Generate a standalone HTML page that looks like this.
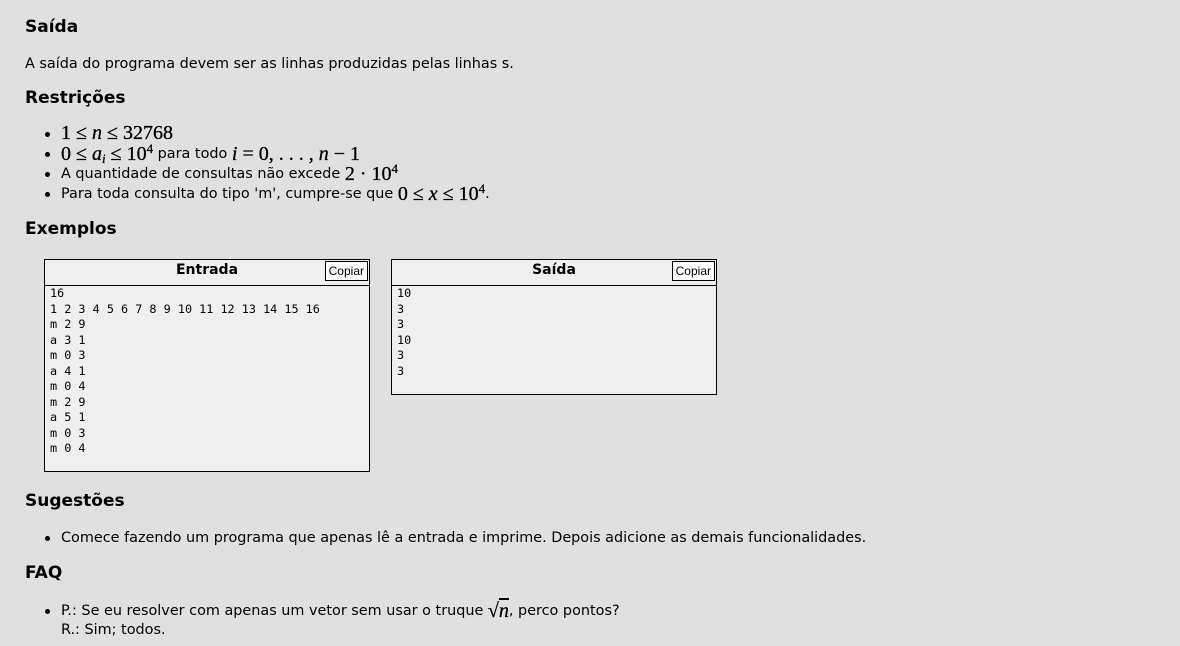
<!DOCTYPE html>
<html><head><meta charset="utf-8"><style>
body{margin:0;width:1180px;height:646px;background:#e0e0e0;font-family:"DejaVu Sans","Liberation Sans",sans-serif;font-size:14.4px;color:#000;position:relative;overflow:hidden}
.a{position:absolute;line-height:20px;white-space:nowrap}
h3{position:absolute;margin:0;font-size:17px;line-height:20px;font-weight:bold;left:25px}
.m{font-family:"Liberation Serif",serif;font-size:20px;line-height:0;position:relative;top:2px;-webkit-text-stroke:0.3px #000}
.m i{font-style:italic}
sup,sub{font-size:13px;line-height:0}
sup{vertical-align:7px}
sub{vertical-align:-3px}
.b{position:absolute;left:45px}
.b::before{content:"";position:absolute;left:0;top:9px;width:5px;height:5px;border-radius:50%;background:#000}
.t{left:61px}
.box{position:absolute;border:1px solid #000;background:#efefef}
.hd{height:25px;border-bottom:1px solid #000;text-align:center;font-weight:bold;font-size:14px;line-height:20px;position:relative}
.cp{position:absolute;right:1px;top:1px;border:1px solid #000;font-family:"Liberation Sans",sans-serif;font-weight:normal;font-size:12px;padding:0 3px;line-height:18px;background:#fff}
pre{margin:0;padding:0 5px;font-family:"DejaVu Sans Mono",monospace;font-size:11.8px;line-height:15.5px}
</style></head><body>
<h3 style="top:17px">Saída</h3>
<div class="a" style="left:25px;top:54px">A saída do programa devem ser as linhas produzidas pelas linhas s.</div>
<h3 style="top:88px">Restrições</h3>
<div class="b" style="top:123px"></div><div class="a t" style="top:123px"><span class="m">1 ≤ <i>n</i> ≤ 32768</span></div>
<div class="b" style="top:143px"></div><div class="a t" style="top:144px"><span class="m">0 ≤ <i>a<sub>i</sub></i> ≤ 10<sup>4</sup></span> para todo <span class="m"><i>i</i> = 0, . . . , <i>n</i> − 1</span></div>
<div class="b" style="top:163px"></div><div class="a t" style="top:164px">A quantidade de consultas não excede <span class="m">2 · 10<sup>4</sup></span></div>
<div class="b" style="top:183px"></div><div class="a t" style="top:184px">Para toda consulta do tipo 'm', cumpre-se que <span class="m">0 ≤ <i>x</i> ≤ 10<sup>4</sup></span>.</div>
<h3 style="top:219px">Exemplos</h3>
<div class="box" style="left:44px;top:259px;width:324px;height:211px"><div class="hd">Entrada<span class="cp">Copiar</span></div>
<pre>16
1 2 3 4 5 6 7 8 9 10 11 12 13 14 15 16
m 2 9
a 3 1
m 0 3
a 4 1
m 0 4
m 2 9
a 5 1
m 0 3
m 0 4</pre></div>
<div class="box" style="left:391px;top:259px;width:324px;height:134px"><div class="hd">Saída<span class="cp">Copiar</span></div>
<pre>10
3
3
10
3
3</pre></div>
<h3 style="top:491px">Sugestões</h3>
<div class="b" style="top:527px"></div><div class="a t" style="top:528px">Comece fazendo um programa que apenas lê a entrada e imprime. Depois adicione as demais funcionalidades.</div>
<h3 style="top:563px">FAQ</h3>
<div class="b" style="top:600px"></div><div class="a t" style="top:601px">P.: Se eu resolver com apenas um vetor sem usar o truque <span class="m">√<i style="text-decoration:overline">n</i></span>, perco pontos?</div>
<div class="a t" style="top:620px">R.: Sim; todos.</div>
</body></html>
